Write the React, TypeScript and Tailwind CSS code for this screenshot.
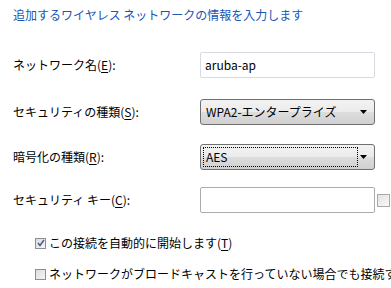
import { ReactNode } from "react";

const font = { fontFamily: '"Noto Sans CJK JP", "Noto Sans", sans-serif' };

const Key = ({ k }: { k: string }) => (
  <>
    (<span className="underline underline-offset-2">{k}</span>)
  </>
);

const Row = ({ label, children, className }: { label: ReactNode; children: ReactNode; className: string }) => (
  <div className={`flex items-center ${className}`}>
    <div className="w-[187px] shrink-0 text-[12px] leading-[16px] text-black">{label}</div>
    {children}
  </div>
);

const TextBox = ({ value, dark }: { value?: string; dark?: boolean }) => (
  <div
    className={`flex h-[26px] w-[175px] shrink-0 items-center rounded-[2px] border bg-white pl-[4px] text-[12px] text-black ${
      dark ? "border-[#acacac]" : "border-[#d6dbe2]"
    }`}
  >
    {value}
  </div>
);

const Combo = ({ value, focused }: { value: string; focused?: boolean }) => (
  <div className="relative flex h-[26px] w-[175px] shrink-0 items-center rounded-[3px] border border-[#707070] bg-[linear-gradient(#f3f3f3_0%,#ebebeb_48%,#dddddd_52%,#d0d0d0_100%)] text-[12px] text-black">
    <div
      className={`ml-[2px] flex h-[20px] w-[155px] items-center pl-[2px] ${
        focused ? "border border-dotted border-black" : "border border-transparent"
      }`}
    >
      {value}
    </div>
    <svg className="absolute right-[7px] top-[10px]" width="7" height="4" viewBox="0 0 7 4">
      <path d="M0 0h7L3.5 4z" fill="#000" />
    </svg>
  </div>
);

const Check = ({ checked }: { checked?: boolean }) => (
  <div className="flex h-[11px] w-[11px] shrink-0 items-center justify-center border border-[#8e8f8f] bg-[linear-gradient(135deg,#dcdcdc,#f6f6f6)]">
    {checked && (
      <svg width="8" height="8" viewBox="0 0 8 8">
        <path d="M1 4l2 2.5L7 1" fill="none" stroke="#4a5f97" strokeWidth="1.6" />
      </svg>
    )}
  </div>
);

export default function App() {
  return (
    <div className="h-[288px] w-[391px] overflow-hidden bg-white pl-[13px] pt-[7px] whitespace-nowrap" style={font}>
      <div className="text-[12px] leading-[16px] text-[#1a55b5]">追加するワイヤレス ネットワークの情報を入力します</div>

      <Row className="mt-[29px]" label={<>ネットワーク名<Key k="E" />:</>}>
        <TextBox value="aruba-ap" />
      </Row>

      <Row className="mt-[21px]" label={<>セキュリティの種類<Key k="S" />:</>}>
        <Combo value="WPA2-エンタープライズ" />
      </Row>

      <Row className="mt-[19px]" label={<>暗号化の種類<Key k="R" />:</>}>
        <Combo value="AES" focused />
      </Row>

      <Row className="mt-[17px]" label={<>セキュリティ キー<Key k="C" />:</>}>
        <TextBox dark />
        <div className="ml-[2px] h-[13px] w-[13px] shrink-0 border border-[#a8a8a8] bg-[linear-gradient(135deg,#e2e2e2,#fafafa)]" />
      </Row>

      <div className="ml-[22px] mt-[22px] flex h-[16px] items-center gap-[3px] text-[12px] text-black">
        <Check checked />
        <span>この接続を自動的に開始します<Key k="T" /></span>
      </div>

      <div className="ml-[22px] mt-[15px] flex h-[16px] items-center gap-[3px] text-[12px] text-black">
        <Check />
        <span>ネットワークがブロードキャストを行っていない場合でも接続する<Key k="O" /></span>
      </div>
    </div>
  );
}
